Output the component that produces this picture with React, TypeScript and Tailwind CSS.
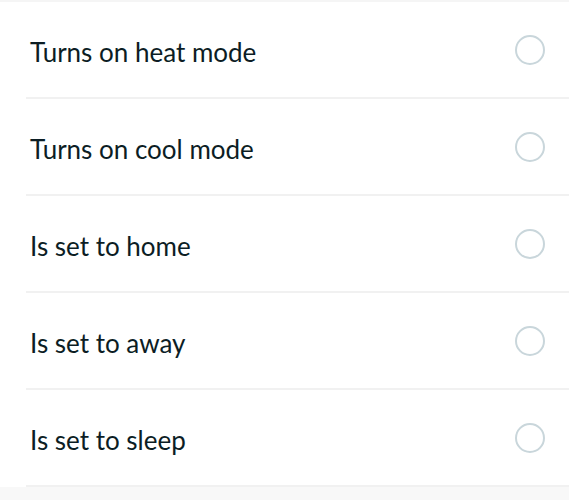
const triggers = [
  "Turns on heat mode",
  "Turns on cool mode",
  "Is set to home",
  "Is set to away",
  "Is set to sleep",
];

const App = () => {
  return (
    <div className="min-h-screen bg-[#f8f8f8] font-['Lato','Noto_Sans',sans-serif]">
      <div className="bg-white border-t-2 border-[#f5f5f5]">
        {triggers.map((label) => (
          <div key={label} className="ml-[26px] border-b-2 border-[#f1f1f1]">
            <div className="flex h-[95px] items-center justify-between pl-[4px] pr-[24px]">
              <span className="pt-[4px] text-[26px] leading-none text-[#0c1d24]">{label}</span>
              <span className="block h-[30px] w-[30px] rounded-full border-2 border-[#c9d6db]" />
            </div>
          </div>
        ))}
      </div>
    </div>
  );
};

export default App;
